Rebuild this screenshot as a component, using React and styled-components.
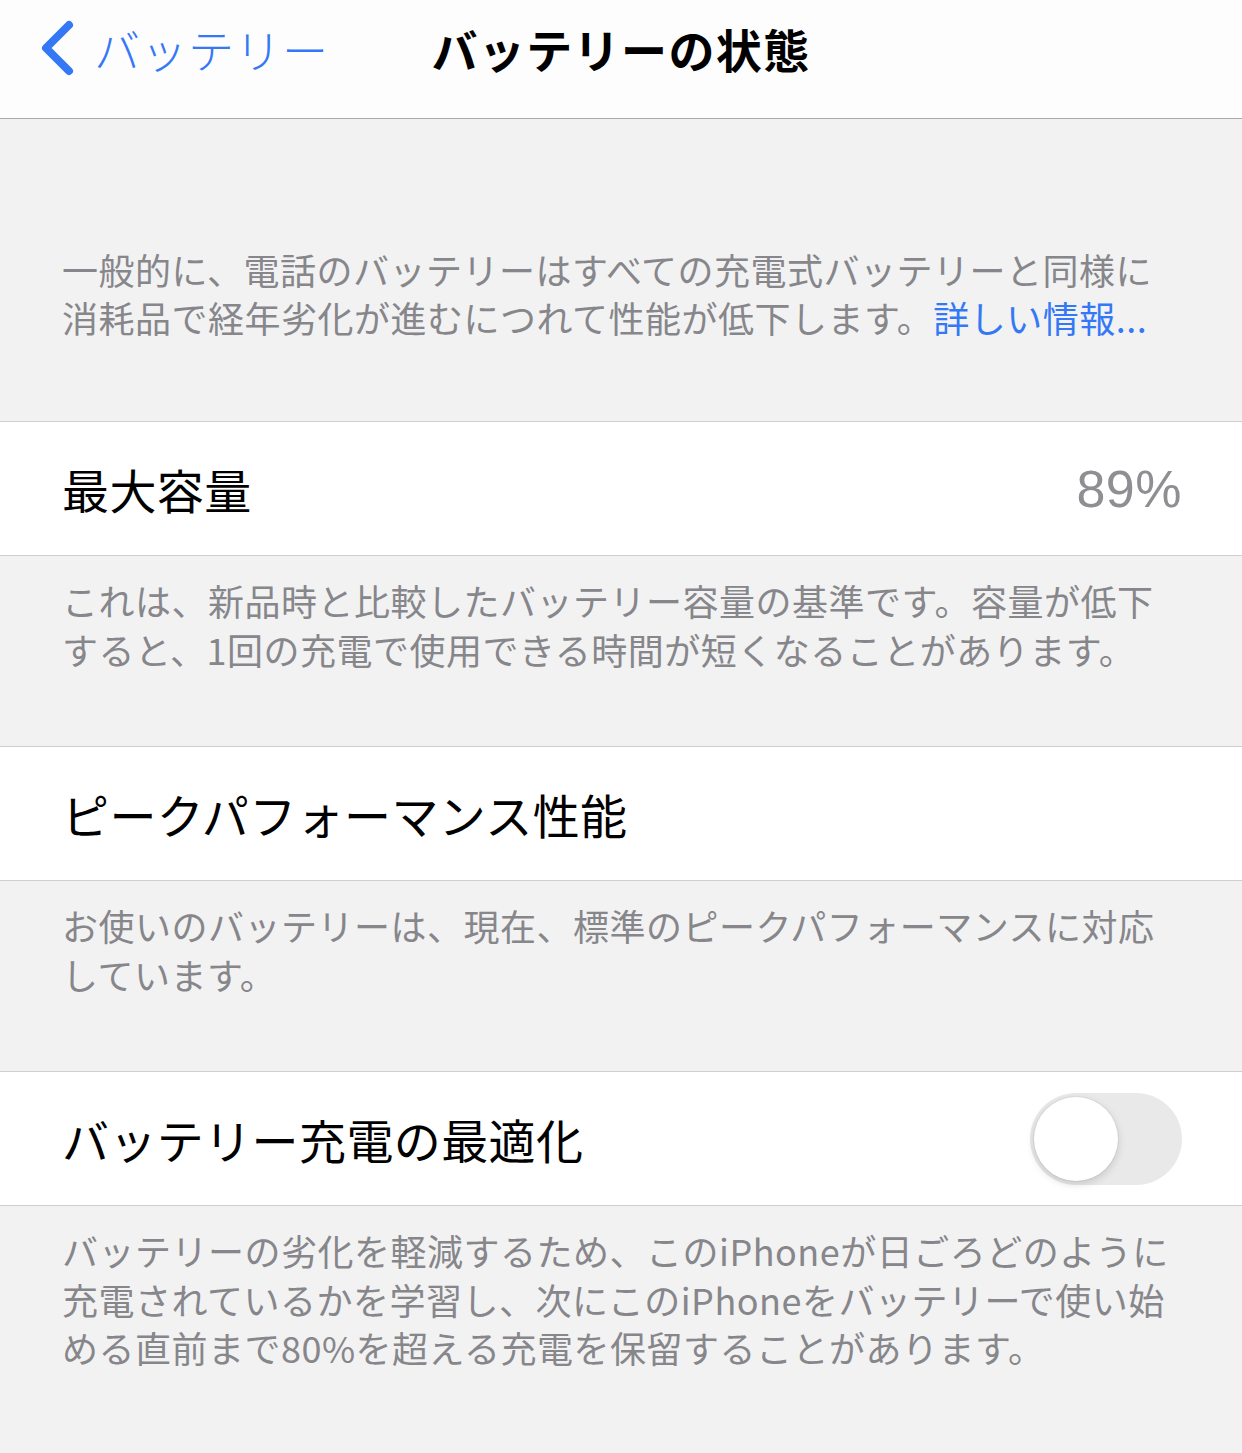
import React, {useState} from "react";
import styled, {createGlobalStyle} from "styled-components";

const GlobalStyle = createGlobalStyle`
  html, body {
    margin: 0;
    padding: 0;
    background: #f2f2f2;
  }
  body {
    font-family: "Noto Sans CJK JP", "Noto Sans", sans-serif;
    -webkit-font-smoothing: antialiased;
  }
`

const Screen = styled.div`
  width: 1242px;
  min-height: 1453px;
  background: #f2f2f2;
  display: flex;
  flex-direction: column;
`

const NavBar = styled.div`
  height: 119px;
  box-sizing: border-box;
  padding-bottom: 22px;
  background: #fdfdfd;
  border-bottom: 1px solid #a9a9a9;
  display: grid;
  grid-template-columns: 1fr auto 1fr;
  align-items: center;
`

const BackButton = styled.div`
  display: flex;
  align-items: center;
  gap: 16px;
  padding-left: 38px;
  color: #3478f6;
  font-size: 46px;
  font-weight: 300;
  letter-spacing: 1px;
`

const Title = styled.div`
  font-size: 46px;
  font-weight: 700;
  color: #000;
  letter-spacing: 1.4px;
`

const Footer = styled.div`
  padding: ${p => p.$top}px 50px ${p => p.$bottom}px 62px;
  font-size: 36px;
  line-height: ${p => p.$lh || 48}px;
  color: #86868b;
  letter-spacing: 0.5px;
  white-space: nowrap;
`

const Link = styled.span`
  color: #3478f6;
`

const Row = styled.div`
  height: 133px;
  background: #fff;
  border-top: 1px solid #cfcfcf;
  border-bottom: 1px solid #cfcfcf;
  display: flex;
  align-items: center;
  justify-content: space-between;
  padding: 0 60px 0 62px;
`

const RowLabel = styled.div`
  font-size: 47px;
  color: #000;
  letter-spacing: 0.4px;
`

const RowValue = styled.div`
  font-family: "Liberation Sans", "Noto Sans", sans-serif;
  font-size: 52px;
  letter-spacing: 0.5px;
  color: #8e8e93;
`

const Switch = styled.button`
  width: 152px;
  height: 92px;
  border-radius: 46px;
  border: none;
  padding: 4px;
  background: ${p => p.$on ? "#34c759" : "#e9e9ea"};
  display: flex;
  justify-content: ${p => p.$on ? "flex-end" : "flex-start"};
  align-items: center;
  cursor: pointer;
`

const Knob = styled.span`
  width: 84px;
  height: 84px;
  border-radius: 50%;
  background: #fff;
  box-shadow: 0 3px 8px rgba(0,0,0,0.15), 0 0 0 1px rgba(0,0,0,0.04);
`

const App = () => {
  const [optimized, setOptimized] = useState(false);

  return (
    <Screen>
      <GlobalStyle />
      <NavBar>
        <BackButton>
          <svg width="40" height="56" viewBox="0 0 40 56">
            <path d="M31 5 L8 28 L31 51" fill="none" stroke="#3478f6" strokeWidth="8" strokeLinecap="round" strokeLinejoin="round" />
          </svg>
          <span>バッテリー</span>
        </BackButton>
        <Title>バッテリーの状態</Title>
        <div />
      </NavBar>

      <Footer $top={126} $bottom={80}>
        一般的に、電話のバッテリーはすべての充電式バッテリーと同様に<br />
        消耗品で経年劣化が進むにつれて性能が低下します。<Link>詳しい情報...</Link>
      </Footer>

      <Row>
        <RowLabel>最大容量</RowLabel>
        <RowValue>89%</RowValue>
      </Row>
      <Footer $top={20} $bottom={72} $lh={49}>
        これは、新品時と比較したバッテリー容量の基準です。容量が低下<br />
        すると、1回の充電で使用できる時間が短くなることがあります。
      </Footer>

      <Row>
        <RowLabel>ピークパフォーマンス性能</RowLabel>
      </Row>
      <Footer $top={20} $bottom={72} $lh={49}>
        お使いのバッテリーは、現在、標準のピークパフォーマンスに対応<br />
        しています。
      </Footer>

      <Row>
        <RowLabel>バッテリー充電の最適化</RowLabel>
        <Switch $on={optimized} onClick={() => setOptimized(!optimized)}>
          <Knob />
        </Switch>
      </Row>
      <Footer $top={20} $bottom={60} $lh={48.5}>
        バッテリーの劣化を軽減するため、このiPhoneが日ごろどのように<br />
        充電されているかを学習し、次にこのiPhoneをバッテリーで使い始<br />
        める直前まで80%を超える充電を保留することがあります。
      </Footer>
    </Screen>
  );
};

export default App;
